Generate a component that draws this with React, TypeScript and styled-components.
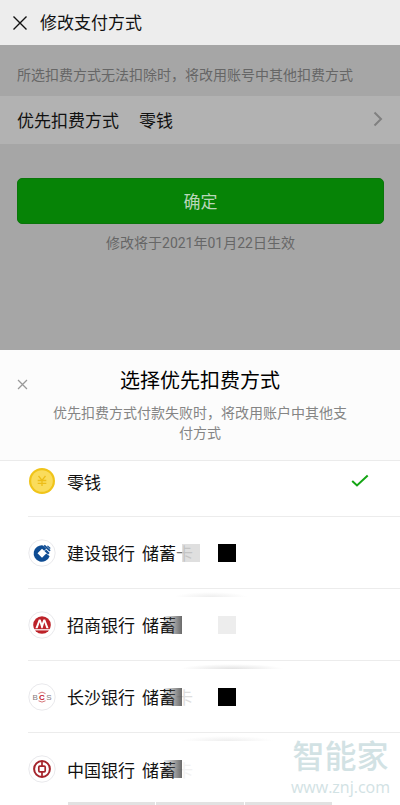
import React, { useState } from "react";
import styled, { createGlobalStyle } from "styled-components";

const GlobalStyle = createGlobalStyle`
  * { box-sizing: border-box; }
  body {
    margin: 0;
    background: #fff;
    font-family: Roboto, "Noto Sans CJK SC", sans-serif;
    color: #111;
  }
  button, input { font: inherit; color: inherit; margin: 0; }
  h1, h2, p, ul { margin: 0; padding: 0; font-weight: 400; }
`;

const Page = styled.div`
  display: flex;
  flex-direction: column;
  height: 100vh;
  overflow: hidden;
`;

const TopBar = styled.header`
  display: flex;
  flex: none;
  align-items: center;
  gap: 12px;
  height: 45px;
  padding: 0 12px;
  background: #ededed;
`;

const IconButton = styled.button`
  display: flex;
  align-items: center;
  padding: 0;
  border: 0;
  background: none;
`;

const TopTitle = styled.h1`
  font-size: 17px;
  line-height: 24px;
`;

const Dimmed = styled.main`
  flex: 1;
  background: #a6a6a6;
`;

const Notice = styled.p`
  padding: 20px 17px 11px;
  font-size: 14px;
  line-height: 20px;
  color: #666;
`;

const MethodRow = styled.button`
  display: flex;
  align-items: center;
  gap: 20px;
  width: 100%;
  height: 48px;
  padding: 0 17px 2px;
  border: 0;
  background: #b2b2b2;
  font-size: 17px;
  text-align: left;
`;

const MethodValue = styled.span`
  flex: 1;
`;

const ConfirmArea = styled.div`
  display: flex;
  flex-direction: column;
  gap: 9px;
  padding: 34px 16px 0 17px;
`;

const ConfirmButton = styled.button`
  height: 46px;
  padding: 0 0 2px;
  border: 1px solid #0a750a;
  border-radius: 5px;
  background: #068306;
  color: #b9d6b9;
  font-size: 17px;
`;

const EffectiveDate = styled.p`
  font-size: 14px;
  line-height: 20px;
  color: #666;
  text-align: center;
`;

const Sheet = styled.section`
  position: relative;
  flex: none;
  background: #fff;
`;

const SheetHeader = styled.div`
  display: grid;
  grid-template-columns: 31px 1fr 31px;
  padding: 17px 17px 17px;
  background: #fcfcfc;
  border-bottom: 1px solid #ebebeb;
`;

const CloseButton = styled(IconButton)`
  height: 34px;
`;

const SheetText = styled.div`
  display: flex;
  flex-direction: column;
  gap: 8px;
  text-align: center;
`;

const SheetTitle = styled.h2`
  font-size: 20px;
  line-height: 28px;
  color: #000;
`;

const SheetHint = styled.p`
  font-size: 14px;
  line-height: 20px;
  color: #858585;
`;

const OptionList = styled.ul`
  list-style: none;
  padding-left: 28px;
`;

const OptionItem = styled.li<{ $clipped?: boolean }>`
  position: relative;
  height: ${(p) => (p.$clipped ? 56 : 72)}px;
  padding-bottom: ${(p) => (p.$clipped ? 15 : 0)}px;
  border-bottom: 1px solid #ececec;

  &:last-child {
    border-bottom: 0;
  }
`;

const OptionLabel = styled.label`
  display: flex;
  align-items: center;
  gap: 11px;
  height: 100%;
  padding-right: 31px;
  font-size: 17px;
`;

const HiddenRadio = styled.input`
  position: absolute;
  opacity: 0;
  pointer-events: none;
`;

const OptionName = styled.span`
  display: flex;
  flex: 1;
  gap: 7px;
`;

const Faded = styled.span<{ $color: string }>`
  color: ${(p) => p.$color};
`;

const Mask = styled.span<{ $x: number; $fill: string }>`
  position: absolute;
  top: 27px;
  left: ${(p) => p.$x}px;
  width: 18px;
  height: 18px;
  background: ${(p) => p.$fill};
`;

const Smudge = styled.span<{ $x: number; $width: number; $tone: string }>`
  position: absolute;
  top: 3px;
  left: ${(p) => p.$x}px;
  width: ${(p) => p.$width}px;
  height: 5px;
  background: radial-gradient(ellipse at bottom, ${(p) => p.$tone}, transparent 70%);
`;

const Watermark = styled.div`
  position: absolute;
  right: 10px;
  bottom: 8px;
  color: #d2e2e4;
  text-align: center;
  pointer-events: none;
`;

const WatermarkName = styled.div`
  font-size: 32px;
  line-height: 40px;
  font-weight: 500;
`;

const WatermarkSite = styled.div`
  font-family: "Open Sans", sans-serif;
  font-size: 16px;
  line-height: 20px;
`;

const BottomBar = styled.div`
  position: absolute;
  bottom: 0;
  left: 17%;
  right: 17%;
  display: grid;
  grid-template-columns: repeat(3, 1fr);
  gap: 1px;
  height: 3px;
`;

const BarSegment = styled.span`
  background: #e2e2e2;
`;

const Cross = ({ size, color, weight }: { size: number; color: string; weight: number }) => (
  <svg width={size} height={size} viewBox="0 0 16 16" fill="none" stroke={color} strokeWidth={weight} aria-hidden="true">
    <path d="M1.5 1.5 14.5 14.5M14.5 1.5 1.5 14.5" />
  </svg>
);

const Chevron = () => (
  <svg width="10" height="16" viewBox="0 0 10 16" fill="none" stroke="#808080" strokeWidth="2" aria-hidden="true">
    <path d="M1.5 1.5 8 8 1.5 14.5" />
  </svg>
);

const Check = () => (
  <svg width="18" height="14" viewBox="0 0 18 14" fill="none" stroke="#14a514" strokeWidth="2" aria-hidden="true">
    <path d="M1.2 7 6 11.5 16.7 1.5" />
  </svg>
);

const Disc = ({ children }: { children: React.ReactNode }) => (
  <svg width="28" height="28" viewBox="0 0 28 28" aria-hidden="true">
    <circle cx="14" cy="14" r="13.2" fill="#fff" stroke="#e9e9ec" />
    {children}
  </svg>
);

const Coin = () => (
  <svg width="28" height="28" viewBox="0 0 28 28" aria-hidden="true">
    <circle cx="14" cy="14" r="13" fill="#f0c419" />
    <circle cx="14" cy="14" r="10.8" fill="#fadc5c" />
    <path d="M10.5 9 14 13.3 17.5 9M9.7 13.5h8.6M9.7 16.3h8.6M14 13.3V19" fill="none" stroke="#edbd18" strokeWidth="1.3" />
  </svg>
);

const ConstructionBank = () => (
  <Disc>
    <path
      d="M15 6.4A8.2 8.2 0 1 0 21.6 17.2L18.3 14.6 14 18.7 9.5 14.2 14 9.7 16.2 11.7 18.3 9.7Z"
      fill="#0e4c93"
    />
    <path d="M16.2 6.4 22 11.8" stroke="#0e4c93" strokeWidth="1.8" />
    <path d="M19.4 6.9 22.2 9.5" stroke="#0e4c93" strokeWidth="1.2" />
    <path d="M17.3 11.4 20.9 14.8" stroke="#0e4c93" strokeWidth="2.2" />
  </Disc>
);

const MerchantsBank = () => (
  <Disc>
    <circle cx="14" cy="14" r="8.8" fill="#bd2229" />
    <path
      d="M7.4 17.2 10.8 8.6H12.6L14 12.2 15.4 8.6H17.2L20.6 17.2H18.4L16.3 11.2 14.6 17.2H13.4L11.7 11.2 9.6 17.2Z"
      fill="#fff"
    />
    <path d="M6.3 18.8h15.4" stroke="#fff" strokeWidth="1.2" />
  </Disc>
);

const ChangshaBank = () => (
  <Disc>
    <g fontFamily="Liberation Sans, sans-serif" textAnchor="middle">
      <text x="7.2" y="16.8" fontSize="8" fill="#857c7e">B</text>
      <text x="14" y="17" fontSize="8" fontWeight="700" fill="#c4202a">C</text>
      <text x="20.9" y="16.8" fontSize="8" fill="#857c7e">S</text>
    </g>
    <path d="M10.5 10.6Q14 7.6 17.5 10.6M10.5 17.8Q14 20.4 17.5 17.8" fill="none" stroke="#d0666b" strokeWidth="0.9" />
  </Disc>
);

const BankOfChina = () => (
  <Disc>
    <circle cx="14" cy="14" r="7.9" fill="none" stroke="#a5242b" strokeWidth="2" />
    <rect x="10.8" y="11.2" width="6.4" height="5.6" rx="1" fill="none" stroke="#a5242b" strokeWidth="1.7" />
    <path d="M14 6v5M14 17v5" stroke="#a5242b" strokeWidth="1.7" />
  </Disc>
);

type Option = {
  id: string;
  icon: React.ReactNode;
  name: string;
  kind?: string;
  faded?: string;
  masks?: { x: number; fill: string }[];
  smudge?: { x: number; width: number; tone: string };
};

const shade = "linear-gradient(90deg, rgba(90,90,90,0.1), rgba(80,80,80,0.85))";

const options: Option[] = [
  { id: "balance", icon: <Coin />, name: "零钱" },
  {
    id: "ccb",
    icon: <ConstructionBank />,
    name: "建设银行",
    kind: "储蓄",
    faded: "#777",
    masks: [
      { x: 154, fill: "rgba(215,215,215,0.8)" },
      { x: 190, fill: "#000" },
    ],
  },
  {
    id: "cmb",
    icon: <MerchantsBank />,
    name: "招商银行",
    kind: "储蓄",
    masks: [
      { x: 136, fill: shade },
      { x: 190, fill: "#ededed" },
    ],
    smudge: { x: 146, width: 74, tone: "#eee" },
  },
  {
    id: "bcs",
    icon: <ChangshaBank />,
    name: "长沙银行",
    kind: "储蓄",
    faded: "#ddd",
    masks: [
      { x: 136, fill: shade },
      { x: 190, fill: "#000" },
    ],
    smudge: { x: 152, width: 104, tone: "#e2e2e2" },
  },
  {
    id: "boc",
    icon: <BankOfChina />,
    name: "中国银行",
    kind: "储蓄",
    faded: "#f2f2f2",
    masks: [{ x: 136, fill: shade }],
    smudge: { x: 152, width: 94, tone: "#eee" },
  },
];

export default function App() {
  const [selected, setSelected] = useState("balance");

  return (
    <>
      <GlobalStyle />
      <Page>
        <TopBar>
          <IconButton type="button" aria-label="关闭">
            <Cross size={16} color="#111" weight={1.4} />
          </IconButton>
          <TopTitle>修改支付方式</TopTitle>
        </TopBar>
        <Dimmed>
          <Notice>所选扣费方式无法扣除时，将改用账号中其他扣费方式</Notice>
          <MethodRow type="button">
            <span>优先扣费方式</span>
            <MethodValue>零钱</MethodValue>
            <Chevron />
          </MethodRow>
          <ConfirmArea>
            <ConfirmButton type="button">确定</ConfirmButton>
            <EffectiveDate>修改将于2021年01月22日生效</EffectiveDate>
          </ConfirmArea>
        </Dimmed>
        <Sheet role="dialog" aria-labelledby="sheet-title">
          <SheetHeader>
            <CloseButton type="button" aria-label="关闭选择">
              <Cross size={11} color="#999" weight={1.8} />
            </CloseButton>
            <SheetText>
              <SheetTitle id="sheet-title">选择优先扣费方式</SheetTitle>
              <SheetHint>优先扣费方式付款失败时，将改用账户中其他支付方式</SheetHint>
            </SheetText>
          </SheetHeader>
          <OptionList>
            {options.map((option, index) => (
              <OptionItem key={option.id} $clipped={index === 0}>
                <OptionLabel>
                  <HiddenRadio
                    type="radio"
                    name="method"
                    value={option.id}
                    checked={selected === option.id}
                    onChange={() => setSelected(option.id)}
                  />
                  {option.icon}
                  <OptionName>
                    <span>{option.name}</span>
                    {option.kind && (
                      <span>
                        {option.kind}
                        {option.faded && <Faded $color={option.faded}>卡</Faded>}
                      </span>
                    )}
                  </OptionName>
                  {selected === option.id && <Check />}
                </OptionLabel>
                {option.masks?.map((mask) => (
                  <Mask key={mask.x} $x={mask.x} $fill={mask.fill} />
                ))}
                {option.smudge && (
                  <Smudge $x={option.smudge.x} $width={option.smudge.width} $tone={option.smudge.tone} />
                )}
              </OptionItem>
            ))}
          </OptionList>
          <Watermark>
            <WatermarkName>智能家</WatermarkName>
            <WatermarkSite>www.znj.com</WatermarkSite>
          </Watermark>
          <BottomBar>
            <BarSegment />
            <BarSegment />
            <BarSegment />
          </BottomBar>
        </Sheet>
      </Page>
    </>
  );
}
